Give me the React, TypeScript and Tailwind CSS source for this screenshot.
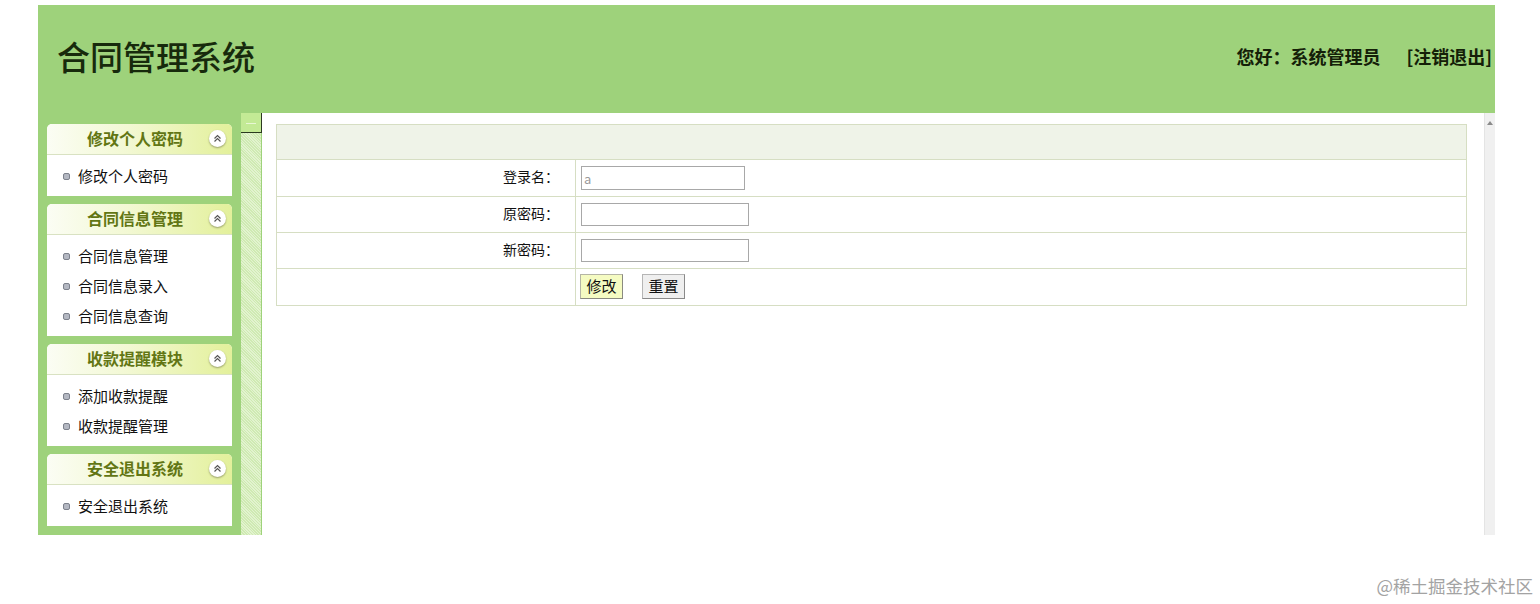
import React from "react";

// 左侧菜单数据
const menus = [
  { title: "修改个人密码", items: ["修改个人密码"] },
  { title: "合同信息管理", items: ["合同信息管理", "合同信息录入", "合同信息查询"] },
  { title: "收款提醒模块", items: ["添加收款提醒", "收款提醒管理"] },
  { title: "安全退出系统", items: ["安全退出系统"] },
];

const fields = [
  { label: "登录名：", value: "a", w: "w-[164px]", h: "h-[24px]", row: "h-[37px]" },
  { label: "原密码：", value: "", w: "w-[168px]", h: "h-[23px]", row: "h-[36px]" },
  { label: "新密码：", value: "", w: "w-[168px]", h: "h-[23px]", row: "h-[36px]" },
];

function Chevron() {
  return (
    <span className="w-[17px] h-[17px] rounded-full bg-white shadow-[0_1px_2px_rgba(0,0,0,0.35)] flex items-center justify-center">
      <svg width="9" height="9" viewBox="0 0 9 9" fill="none" stroke="#555" strokeWidth="1.2">
        <path d="M1.5 4.5 L4.5 1.5 L7.5 4.5" />
        <path d="M1.5 7.5 L4.5 4.5 L7.5 7.5" />
      </svg>
    </span>
  );
}

function MenuPanel({ title, items }: { title: string; items: string[] }) {
  return (
    <div className="w-[185px] rounded-t-[5px] overflow-hidden bg-white">
      <div className="h-[31px] border-b border-[#d9e2c2] bg-[linear-gradient(90deg,#fbfdf4_0%,#f2f8d2_45%,#e3f09b_100%)] flex items-center pl-[40px] pr-[6px] pb-[2px]">
        <span className="flex-1 text-[16px] font-bold text-[#627614]">{title}</span>
        <Chevron />
      </div>
      <div className="pt-[6px] pb-[5px]">
        {items.map((it) => (
          <div key={it} className="h-[30px] flex items-center pl-[16px] gap-[8px]">
            <span className="w-[7px] h-[7px] rounded-[2px] bg-[#b4b8c2] border border-[#7d818c]" />
            <span className="text-[15px] text-[#111]">{it}</span>
          </div>
        ))}
      </div>
    </div>
  );
}

export default function App() {
  return (
    <div className="w-[1540px] h-[604px] bg-white font-['Noto_Sans_CJK_SC','Noto_Sans',sans-serif] pt-[5px]">
      <div className="ml-[38px] w-[1457px] h-[530px] flex flex-col">
        {/* 顶部 */}
        <div className="h-[108px] bg-[#9ed27b] flex items-center justify-between pl-[19px] pr-[3px] pb-[6px]">
          <h1 className="text-[33px] leading-none text-[#172a0c] font-medium">合同管理系统</h1>
          <div className="flex items-center gap-[26px] text-[18px] font-bold text-[#142008]">
            <span>您好：系统管理员</span>
            <span>[注销退出]</span>
          </div>
        </div>

        <div className="flex flex-1 min-h-0">
          {/* 左侧菜单 */}
          <div className="w-[202px] bg-[#9ed27b] pl-[9px] pt-[11px] flex flex-col gap-[8px]">
            {menus.map((m) => (
              <MenuPanel key={m.title} title={m.title} items={m.items} />
            ))}
          </div>

          {/* 分隔条 */}
          <div className="w-[22px] flex flex-col bg-[#9ed27b]">
            <div className="w-[21px] h-[20px] ml-[1px] bg-[#c3ea95] border-r border-b border-[#2b3a20] flex items-center justify-center">
              <span className="w-[10px] h-px bg-[#e8f7d4] mt-[2px]" />
            </div>
            <div className="flex-1 ml-[1px] mr-[1px] bg-[repeating-linear-gradient(45deg,#cfeab2_0px,#cfeab2_1px,#e2f3cf_1px,#e2f3cf_2px)]" />
          </div>

          {/* 内容 */}
          <div className="flex-1 bg-white pl-[14px] pr-[17px] pt-[11px]">
            <div className="border border-[#d6dec3]">
              <div className="h-[35px] bg-[#eff3e8] border-b border-[#d6dec3]" />
              {fields.map((f) => (
                <div key={f.label} className={`flex ${f.row} border-b border-[#d6dec3]`}>
                  <div className="w-[299px] border-r border-[#d6dec3] flex items-center justify-end pr-[16px] pb-[3px] text-[14px] text-[#111]">
                    {f.label}
                  </div>
                  <div className="flex-1 flex items-center pl-[5px]">
                    <input
                      readOnly
                      value={f.value}
                      className={`${f.w} ${f.h} border border-[#a8a8a8] bg-white px-[2px] text-[13px] text-[#9a9a9a] outline-none`}
                    />
                  </div>
                </div>
              ))}
              <div className="flex h-[36px]">
                <div className="w-[299px] border-r border-[#d6dec3]" />
                <div className="flex-1 flex items-center pl-[4px] gap-[19px] pb-[2px]">
                  <button className="w-[43px] h-[25px] bg-[#f5fbc2] border border-[#b5b5a5] border-r-[#8a8a80] border-b-[#8a8a80] text-[15px] text-[#111] leading-none pb-[2px]">
                    修改
                  </button>
                  <button className="w-[43px] h-[25px] bg-[#efefef] border border-[#b5b5b5] border-r-[#8a8a8a] border-b-[#8a8a8a] text-[15px] text-[#111] leading-none pb-[2px]">
                    重置
                  </button>
                </div>
              </div>
            </div>
          </div>

          {/* 滚动条 */}
          <div className="w-[11px] bg-[#f0f0f0] border-l border-[#e4e4e4] flex justify-center pt-[7px]">
            <svg width="6" height="5" viewBox="0 0 6 5">
              <path d="M0 5 L3 1 L6 5 Z" fill="#8a8a8a" />
            </svg>
          </div>
        </div>
      </div>

      <div className="w-[1533px] text-right mt-[42px] text-[17.5px] text-[#a3a3a3] leading-none">@稀土掘金技术社区</div>
    </div>
  );
}
